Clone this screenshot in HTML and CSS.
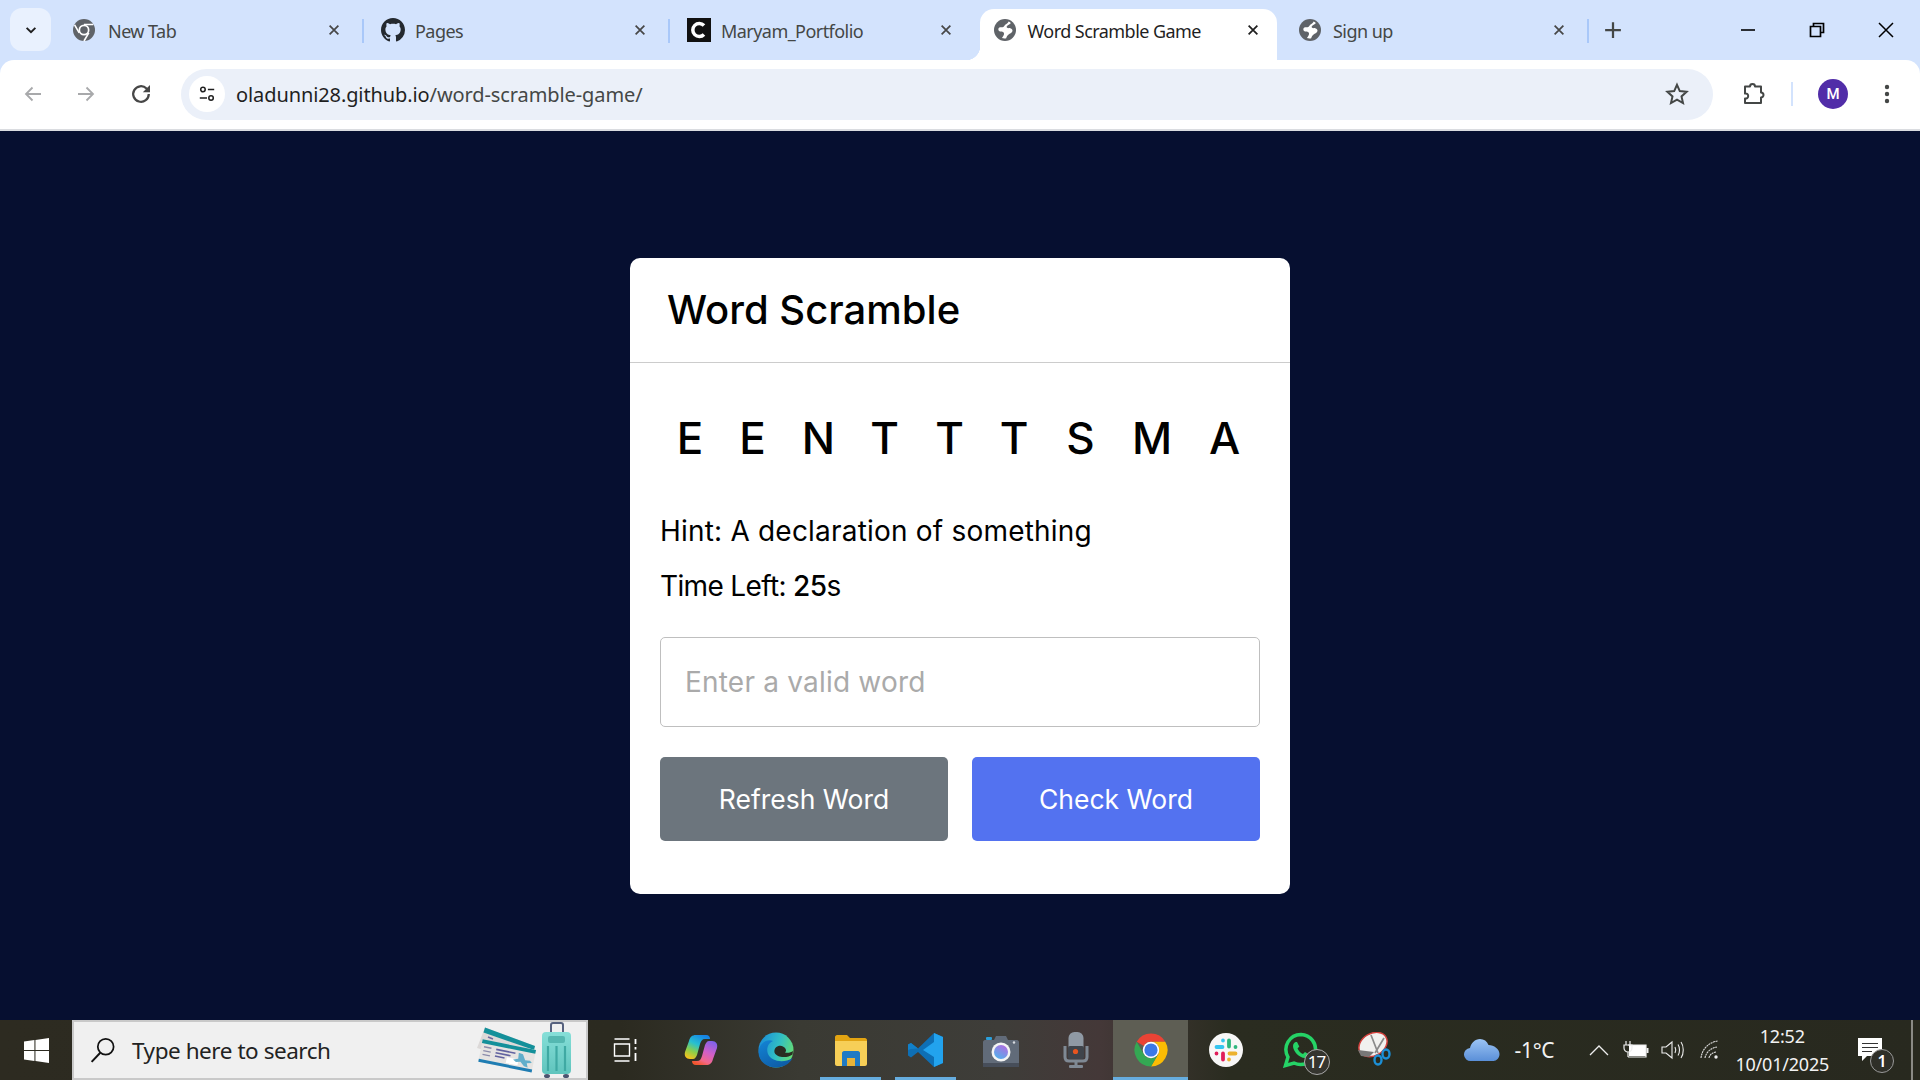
FILE: index.html
```html
<!DOCTYPE html>
<html lang="en">
<head>
<meta charset="utf-8">
<title>Word Scramble Game</title>
<link rel="stylesheet" href="styles.css">
</head>
<body>
<svg class="defs" aria-hidden="true">
  <symbol id="globe" viewBox="0 0 24 24"><circle cx="12" cy="12" r="11" fill="currentColor"/><path fill="#fff" d="M15.500 3.500c-.3 1.800-1.800 2.200-3 3-1.100.8-1 2-2.300 2.500-1.400.5-3.100-.3-4.200.8-1 1-.9 2.800.4 3.400 1.300.7 2.900.1 4 1 1 .9.700 2.400 0 3.500-.5.800-1 1.700-1.500 2.300 1.600.5 3 .5 4.300.2.500-1.500 1.200-2.800 2.400-3.700 1.300-1 3-1.500 3.700-3 .8-1.600-.5-3-2-3.300-1.300-.3-2.600.3-3.400-.6-.7-.9.200-1.800 1-2.300 1.100-.7 2.300-1.100 2.900-2.300-.7-.7-1.500-1.200-2.300-1.500z"/></symbol>
  <symbol id="x" viewBox="0 0 16 16"><path d="M3 3l10 10M13 3L3 13" fill="none" stroke="currentColor" stroke-width="2"/></symbol>
</svg>

<div class="chrome">
  <div class="tabstrip">
    <div class="tab-search"><svg viewBox="0 0 16 16" class="ico-12"><path d="M3 5.500l5 5 5-5" fill="none" stroke="#1f1f1f" stroke-width="2.200"/></svg></div>
    <div class="tab">
      <svg class="fav" viewBox="0 0 24 24"><circle cx="12" cy="12" r="11" fill="#5f6368"/><circle cx="12" cy="12" r="5.500" fill="#fff"/><circle cx="12" cy="12" r="3.800" fill="#5f6368"/><path d="M12 6.500h9.300M7.200 14.800L2.600 6.800M16.800 14.800L12 23" stroke="#fff" stroke-width="1.600"/></svg>
      <span class="tab-title">New Tab</span>
      <svg class="tab-x"><use href="#x"/></svg>
    </div>
    <div class="tab">
      <svg class="fav fav-shift" viewBox="0 0 16 16"><path fill="#24292f" d="M8 0C3.580 0 0 3.580 0 8c0 3.540 2.290 6.530 5.470 7.590.4.070.55-.17.55-.38 0-.19-.01-.82-.01-1.490-2.010.37-2.530-.49-2.690-.94-.09-.23-.48-.94-.82-1.130-.28-.15-.68-.52-.01-.53.63-.01 1.080.58 1.230.82.72 1.210 1.870.87 2.330.66.07-.52.28-.87.51-1.070-1.780-.2-3.640-.89-3.640-3.950 0-.87.31-1.590.82-2.150-.08-.2-.36-1.020.08-2.120 0 0 .67-.21 2.200.82.64-.18 1.320-.27 2-.27.68 0 1.360.09 2 .27 1.530-1.040 2.200-.82 2.200-.82.44 1.100.16 1.920.08 2.120.51.56.82 1.270.82 2.150 0 3.070-1.870 3.750-3.650 3.950.29.25.54.73.54 1.480 0 1.070-.01 1.930-.01 2.200 0 .21.15.46.55.38A8.013 8.013 0 0016 8c0-4.420-3.580-8-8-8z"/></svg>
      <span class="tab-title">Pages</span>
      <svg class="tab-x"><use href="#x"/></svg>
    </div>
    <div class="tab">
      <svg class="fav fav-shift" viewBox="0 0 24 24"><rect width="24" height="24" fill="#111"/><path d="M17 7.500A6.500 6.500 0 1 0 17 16.500" fill="none" stroke="#fff" stroke-width="3.500"/></svg>
      <span class="tab-title">Maryam_Portfolio</span>
      <svg class="tab-x"><use href="#x"/></svg>
    </div>
    <div class="tab tab-active">
      <svg class="fav fav-globe"><use href="#globe"/></svg>
      <span class="tab-title">Word Scramble Game</span>
      <svg class="tab-x"><use href="#x"/></svg>
    </div>
    <div class="tab tab-last">
      <svg class="fav fav-globe"><use href="#globe"/></svg>
      <span class="tab-title">Sign up</span>
      <svg class="tab-x"><use href="#x"/></svg>
    </div>
    <svg class="newtab" viewBox="0 0 16 16"><path d="M8 1v14M1 8h14" stroke="#444746" stroke-width="2"/></svg>
    <div class="winctl">
      <svg class="wc" viewBox="0 0 16 16"><path d="M1 8h14" stroke="#000" stroke-width="1.600"/></svg>
      <svg class="wc" viewBox="0 0 16 16"><path d="M4.500 4V1.500h10v9H12M1.500 4.500h10v10h-10z" fill="none" stroke="#000" stroke-width="1.700"/></svg>
      <svg class="wc" viewBox="0 0 16 16"><path d="M1 1l14 14M15 1L1 15" stroke="#000" stroke-width="1.500"/></svg>
    </div>
  </div>
  <div class="toolbar">
    <svg class="nav" viewBox="0 0 20 20"><path d="M18 10H3M9.500 3.500L3 10l6.500 6.500" fill="none" stroke="#a8a9ab" stroke-width="1.800"/></svg>
    <svg class="nav" viewBox="0 0 20 20"><path d="M2 10h15M10.500 3.500L17 10l-6.500 6.500" fill="none" stroke="#a8a9ab" stroke-width="1.800"/></svg>
    <svg class="nav-reload" viewBox="0 0 20 20"><path d="M16.500 10a6.500 6.500 0 1 1-1.900-4.600L16.500 7.300" fill="none" stroke="#474747" stroke-width="1.900"/><path d="M17.500 2.500v6h-6z" fill="#474747"/></svg>
    <div class="omnibox">
      <div class="tune"><svg viewBox="0 0 20 20" class="tune-ico"><circle cx="5.500" cy="5" r="2.500" fill="none" stroke="#1f1f1f" stroke-width="1.700"/><path d="M11 5h7M2 14.500h8" stroke="#1f1f1f" stroke-width="1.700"/><circle cx="14.500" cy="14.500" r="2.500" fill="none" stroke="#1f1f1f" stroke-width="1.700"/></svg></div>
      <span class="url"><span class="url-host">oladunni28.github.io</span>/word-scramble-game/</span>
      <svg class="star" viewBox="0 0 24 24"><path d="M12 2.800l2.800 6.300 6.800.7-5.100 4.600 1.500 6.700-6-3.500-6 3.500 1.500-6.700-5.100-4.600 6.800-.7z" fill="none" stroke="#444746" stroke-width="2"/></svg>
    </div>
    <svg class="ext" viewBox="0 0 24 24"><path d="M9 4.500a2.500 2.500 0 0 1 5 0h6v6a2.500 2.500 0 0 1 0 5V21H4v-4.500c2 .3 3.200-1 3.200-2.500S6 11.200 4 11.500V4.500z" fill="none" stroke="#444746" stroke-width="2" stroke-linejoin="round"/></svg>
    <div class="tb-sep"></div>
    <div class="avatar">M</div>
    <svg class="dots" viewBox="0 0 6 24"><circle cx="3" cy="5" r="2.200" fill="#444746"/><circle cx="3" cy="12" r="2.200" fill="#444746"/><circle cx="3" cy="19" r="2.200" fill="#444746"/></svg>
  </div>
</div>

<main class="page">
  <section class="card">
    <header class="card-head"><h1 class="title">Word Scramble</h1></header>
    <div class="card-body">
      <p class="letters"><span>E</span><span>E</span><span>N</span><span>T</span><span>T</span><span>T</span><span>S</span><span>M</span><span>A</span></p>
      <p class="hint">Hint: A declaration of something</p>
      <p class="time">Time Left: <b>25</b>s</p>
      <input class="word" type="text" placeholder="Enter a valid word">
      <div class="actions">
        <button class="btn btn-refresh" type="button">Refresh Word</button>
        <button class="btn btn-check" type="button">Check Word</button>
      </div>
    </div>
  </section>
</main>

<footer class="taskbar">
  <div class="start"><svg viewBox="0 0 24 24" class="win"><path fill="#fff" d="M0 3.400l10-1.400v9.500H0zM11 1.900L24 0v11.500H11zM0 12.500h10V22L0 20.600zM11 12.500h13V24l-13-1.900z"/></svg></div>
  <div class="search">
    <svg class="mag" viewBox="0 0 24 24"><circle cx="14.500" cy="9" r="7.300" fill="none" stroke="#111" stroke-width="1.600"/><path d="M9.500 14.500L1.500 23" stroke="#111" stroke-width="1.800"/></svg>
    <span class="search-text">Type here to search</span>
    <svg class="promo" viewBox="0 0 104 58">
      <defs><linearGradient id="case" x1="0" y1="0" x2="0" y2="1"><stop offset="0" stop-color="#86dfd8"/><stop offset="1" stop-color="#5fc4bd"/></linearGradient></defs>
      <polygon points="11,5.500 61,24 56,42 3,26" fill="#dcd9d8"/>
      <polygon points="11,5.500 61,24 60,28 9.500,10.500" fill="#14909a"/>
      <path d="M14 15l5 2M12 20l5 2" stroke="#6a6a9e" stroke-width="1.500"/>
      <g transform="matrix(.533 .107 -.044 .224 8.700 17.300)">
        <rect width="100" height="100" fill="#e6e4e2"/>
        <rect width="100" height="17" fill="#14909a"/>
        <rect y="87" width="100" height="13" fill="#1f7db3"/>
        <rect x="5" y="28" width="14" height="6" fill="#8b8baa"/>
        <rect x="5" y="45" width="14" height="6" fill="#8b8baa"/>
        <rect x="5" y="62" width="14" height="6" fill="#8b8baa"/>
        <rect x="28" y="28" width="36" height="7" fill="#6263a0"/>
        <rect x="28" y="43" width="28" height="7" fill="#6263a0"/>
        <rect x="28" y="58" width="18" height="7" fill="#6263a0"/>
        <rect x="50" y="56" width="22" height="26" fill="#fff"/>
        <path d="M70 27l8 2 6 24 9-2 4 8-9 6 3 17-7-2-8-16-8 5-6-8 9-8z" fill="#62aecb"/>
      </g>
      <path d="M77 10V3c0-1 1-2 2-2h8c1 0 2 1 2 2v7" fill="none" stroke="#56617e" stroke-width="2"/>
      <rect x="68" y="10" width="29" height="42" rx="4" fill="url(#case)"/>
      <rect x="74" y="14" width="17" height="7" rx="2" fill="#55b8b1"/>
      <path d="M74 24v25M82.500 24v25M91 24v25" stroke="#3fa9a3" stroke-width="2.200"/>
      <ellipse cx="73" cy="54" rx="3" ry="2" fill="#4b5470"/><ellipse cx="92" cy="54" rx="3" ry="2" fill="#4b5470"/>
    </svg>
  </div>
  <div class="slot"><svg class="task-view" viewBox="0 0 26 24"><path d="M1.500 1h15M1.500 6h15v12h-15zM1.500 23h15" fill="none" stroke="#fff" stroke-width="1.400"/><path d="M22.500 1v5M22.500 9v2.500M22.500 15v8" stroke="#fff" stroke-width="1.800"/></svg></div>
  <div class="slot"><svg class="app" viewBox="0 0 36 36">
      <defs>
        <linearGradient id="cp1" x1=".7" y1="0" x2=".2" y2="1"><stop offset="0" stop-color="#1684e6"/><stop offset=".4" stop-color="#27c0d0"/><stop offset=".7" stop-color="#8bcf4a"/><stop offset="1" stop-color="#f6c21c"/></linearGradient>
        <linearGradient id="cp2" x1=".8" y1="0" x2=".3" y2="1"><stop offset="0" stop-color="#7d62ea"/><stop offset=".45" stop-color="#d05fc8"/><stop offset=".8" stop-color="#f2688a"/><stop offset="1" stop-color="#f2562e"/></linearGradient>
      </defs>
      <path fill="url(#cp1)" d="M13 3h10c3 0 4 2 4 4H22c-3 0-4 2-5 5l-3 11c-1 2-2 4-4 4H7c-4 0-6-3-5-7l4-11c1-4 3-6 7-6z"/>
      <path fill="url(#cp2)" d="M23 33H13c-3 0-4-2-4-4h5c3 0 4-2 5-5l3-11c1-2 2-4 4-4h3c4 0 6 3 5 7l-4 11c-1 4-3 6-7 6z"/></svg></div>
  <div class="slot"><svg class="app" viewBox="0 0 36 36">
      <defs>
        <linearGradient id="ed1" x1="0" y1=".3" x2="1" y2=".6"><stop offset="0" stop-color="#1a8ed8"/><stop offset=".55" stop-color="#31bfc4"/><stop offset="1" stop-color="#66dc72"/></linearGradient>
        <linearGradient id="ed2" x1="0" y1="0" x2=".6" y2="1"><stop offset="0" stop-color="#1385d6"/><stop offset="1" stop-color="#0e5da8"/></linearGradient>
      </defs>
      <circle cx="18" cy="18" r="17.500" fill="url(#ed1)"/>
      <path fill="url(#ed2)" d="M.5 20C1 11 9 6.500 15 9c-5 2-7 8-5 13 3 7 15 10 24.500 4-3 6-9 9.500-16.500 9.500C8 35.500.5 29 .5 20z"/>
      <path fill="#2a2c22" d="M16.500 20.500C15.500 15.500 21 12.500 25 14.500c3 1.500 4 4.500 2 6 3 .8 6 0 8-1.500l-.5 3.500C30 26 19 26.500 16.500 20.500z"/></svg></div>
  <div class="slot slot-open"><svg class="app" viewBox="0 0 36 36"><path fill="#e2a412" d="M2 5c0-1 1-2 2-2h10l3 3h15c1 0 2 1 2 2v2H2z"/><path fill="#f7cf57" d="M2 9h32v23c0 1-1 2-2 2H4c-1 0-2-1-2-2z"/><path fill="#1f7ac4" d="M9 34V21c0-1 1-2 2-2h14c1 0 2 1 2 2v13h-5v-8h-8v8z"/><rect x="14" y="26" width="8" height="8" fill="#e8b338"/></svg></div>
  <div class="slot slot-open"><svg class="app" viewBox="0 0 36 36"><path fill="#0e6fb5" d="M26 1l9 4v26l-9 4-16-15-7 5.500L0 23.500V12.500L3 11l7 5.500z"/><path fill="#22a3ee" d="M26 1l9 4v26l-9 4V25L15 18l11-8z"/><path fill="#1180c9" d="M10 16.500L3 11 0 12.500V18l3-1z"/></svg></div>
  <div class="slot"><svg class="app" viewBox="0 0 36 36">
      <defs><linearGradient id="lens" x1=".8" y1="0" x2=".2" y2="1"><stop offset="0" stop-color="#b16be0"/><stop offset="1" stop-color="#4fb2ec"/></linearGradient></defs>
      <path fill="#616b79" d="M0 10c0-1 1-2 2-2h9l2-4h10l2 4h9c1 0 2 1 2 2v25H0z"/>
      <rect y="31" width="36" height="4" fill="#474e5a"/>
      <rect x="3" y="5" width="6" height="3" rx="1" fill="#2a9fdc"/>
      <circle cx="18" cy="20" r="9.500" fill="#f4f4f4"/>
      <circle cx="18" cy="20" r="7" fill="url(#lens)"/>
      <circle cx="31" cy="10.500" r="1.200" fill="#d8dce0"/></svg></div>
  <div class="slot"><svg class="app" viewBox="0 0 36 36"><path d="M7 14v11c0 2 1 4 4 4h14c3 0 4-2 4-4V14" fill="none" stroke="#7f8994" stroke-width="3"/><rect x="10.500" y="0" width="15" height="24" rx="6" fill="#8f99a4"/><rect x="10" y="14" width="16" height="13" rx="2" fill="#3f444b"/><circle cx="17.500" cy="19.500" r="2.600" fill="#e8551f"/><rect x="16.500" y="29" width="3" height="5" fill="#7f8994"/><rect x="11" y="33" width="14" height="3" rx="1" fill="#7f8994"/></svg></div>
  <div class="slot slot-open slot-current"><svg class="app" viewBox="0 0 24 24"><path fill="#ea4335" d="M2.470 6.500A11 11 0 0 1 21.530 6.500H12a5.500 5.500 0 0 0-4.760 2.750z"/><path fill="#fbbc04" d="M21.530 6.500A11 11 0 0 1 12 23l4.760-8.250A5.500 5.500 0 0 0 12 6.500z"/><path fill="#34a853" d="M12 23A11 11 0 0 1 2.470 6.500l4.770 8.250a5.500 5.500 0 0 0 9.520 0z"/><circle cx="12" cy="12" r="5.500" fill="#fff"/><circle cx="12" cy="12" r="4.400" fill="#3b78e7"/></svg></div>
  <div class="slot"><svg class="app" viewBox="0 0 36 36"><circle cx="18" cy="18" r="17" fill="#f7f7f7"/><g fill="none" stroke-linecap="round" stroke-width="3.800"><path stroke="#36c5f0" d="M8.500 15h6M15 8.500v.01"/><path stroke="#2eb67d" d="M21 8.500v6M27.500 15h.01"/><path stroke="#ecb22e" d="M21.500 21.500h6M21 27.500v.01"/><path stroke="#e01e5a" d="M15 21.500v6M8.500 21.500h.01"/></g></svg></div>
  <div class="slot"><span class="wa-wrap"><svg class="app" viewBox="0 0 36 36"><path d="M18 2.500a15 15 0 0 0-13 22.500L2.500 33.500 11 31a15 15 0 1 0 7-28.500z" fill="none" stroke="#25d366" stroke-width="3.500"/><path fill="#25d366" d="M13 10c-1 0-3 1.500-3 4 0 5 6 12 12 12 2.500 0 4-2 4-3.500l-4-2.500-2 2c-2-.7-4.500-3-5.500-5.500l1.800-2L14 10z"/></svg><span class="wa-badge">17</span></span></div>
  <div class="slot"><svg class="app" viewBox="0 0 36 36"><ellipse cx="15" cy="12.500" rx="15" ry="11" transform="rotate(-30 15 12.500)" fill="#f1f1ef" stroke="#d3413d" stroke-width="1.500"/><path d="M0 18l16 2-5 5-8-1z" fill="#777"/><path d="M13 3l7 18M26 6l-9 15" stroke="#8a8a8a" stroke-width="1.700"/><ellipse cx="20" cy="28" rx="3.500" ry="4.500" fill="none" stroke="#1c8fd6" stroke-width="2.400"/><ellipse cx="28" cy="22" rx="3.500" ry="4.500" fill="none" stroke="#1c8fd6" stroke-width="2.400"/></svg></div>
  <div class="tray">
    <svg class="cloud" viewBox="0 0 36 24"><defs><linearGradient id="cl" x1="0" y1="0" x2="0" y2="1"><stop offset="0" stop-color="#9cc4f4"/><stop offset="1" stop-color="#5a8fd8"/></linearGradient></defs><path fill="url(#cl)" d="M7 23a6.500 6.500 0 0 1-1-13c1-5 5-9 10-9 4 0 7 2 8.500 6C30 7 35.500 11 35.500 16c0 4-3 7-6 7z"/></svg>
    <span class="temp">-1°C</span>
    <svg class="chev" viewBox="0 0 20 12"><path d="M1 11l9-9 9 9" fill="none" stroke="#eee" stroke-width="1.300"/></svg>
    <svg class="batt" viewBox="0 0 26 20"><path d="M6 5h17v11H6" fill="#fff"/><path d="M5 5h18v12H5" fill="none" stroke="#eee" stroke-width="1.200"/><rect x="23.500" y="8" width="2" height="5" fill="#eee"/><path d="M3 1v4M7 1v4M1 5h8v3a4 4 0 0 1-8 0zM5 12v5" fill="none" stroke="#eee" stroke-width="1.200"/></svg>
    <svg class="vol" viewBox="0 0 24 20"><path d="M1 7h4l6-5v16l-6-5H1z" fill="none" stroke="#eee" stroke-width="1.100"/><path d="M14 7c1 2 1 4 0 6M17 4.500c2 3 2 8 0 11M20 2c3 4 3 12 0 16" fill="none" stroke="#eee" stroke-width="1.100"/></svg>
    <svg class="wifi" viewBox="0 0 20 20"><path d="M1 18C2 9 9 2 18 1M5 18c1-6 6-10 12-11M9 18c.7-3 3-5.500 7-6" fill="none" stroke="#ddd" stroke-width="1.100" stroke-dasharray="2 .6"/><circle cx="16" cy="17" r="1.700" fill="#eee"/></svg>
    <div class="clock"><span>12:52</span><span>10/01/2025</span></div>
    <div class="notif"><svg viewBox="0 0 24 24" class="notif-ico"><path fill="#fff" d="M0 0h24v18H9l-5 5v-5H0z"/><path d="M4 5.500h16M4 9.500h16M4 13.500h10" stroke="#333" stroke-width="1.200"/></svg><span class="notif-badge">1</span></div>
    <div class="peek"></div>
  </div>
</footer>
</body>
</html>
```
FILE: styles.css
```css
* { box-sizing: border-box; }
html, body { margin: 0; padding: 0; height: 100%; }
body {
  width: 1920px;
  height: 1080px;
  overflow: hidden;
  display: flex;
  flex-direction: column;
  background: #060f30;
  font-family: "Inter", "Liberation Sans", sans-serif;
}
.defs { display: none; }

/* Browser chrome */
.chrome { flex: none; height: 131px; background: #d3e3fd; }
.tabstrip { height: 60px; display: flex; align-items: stretch; padding-left: 10px; }
.tab-search {
  width: 41px; height: 43px; margin: 8px 7px 0 0;
  background: #e9f1fe; border-radius: 12px;
  display: flex; align-items: center; justify-content: center;
}
.ico-12 { width: 14px; height: 14px; }
.tab {
  position: relative;
  width: 306px;
  display: flex; align-items: center;
  padding: 0 23px 0 18px;
  color: #444746;
  font: 18px "Noto Sans", sans-serif;
  letter-spacing: -.55px;
}
.tab::after {
  content: ""; position: absolute; right: 0; top: 19px;
  width: 2px; height: 24px; background: #a9c8f9;
}
.tab:nth-of-type(5)::after { display: none; }
.tab:nth-of-type(4)::after { display: none; }
.tab-active {
  color: #1f1f1f;
  background: #fff;
  margin: 9px 5px 0 4px;
  width: 297px;
  padding: 0 17.500px 9px 16.500px;
  border-radius: 14px 14px 0 0;
}
.tab-active::before, .tab-active::after {
  content: ""; display: block; position: absolute; bottom: 0; top: auto;
  width: 14px; height: 14px; background: radial-gradient(circle at 0 0, #d3e3fd 14px, #fff 14.500px);
}
.tab-active::before { left: -14px; }
.tab-active::after { right: -14px; background: radial-gradient(circle at 100% 0, #d3e3fd 14px, #fff 14.500px); }
.tab-last { width: 307px; padding-left: 20px; }
.tab-last::after { display: block; }
.fav { width: 24px; height: 24px; flex: none; margin-right: 12px; margin-left: -4px; }
.fav-shift { margin-left: -1.500px; margin-right: 10.500px; }
.tab-active .fav { margin-right: 11px; }
.tab-last .fav { margin-right: 11px; }
.fav-globe { color: #5f6368; }
.tab-title { flex: 1; white-space: nowrap; padding-top: 1px; }
.tab-x { width: 14px; height: 14px; flex: none; color: #474747; }
.tab-active .tab-x { color: #1f1f1f; }
.newtab { width: 18px; height: 18px; align-self: center; margin-left: 15px; }
.winctl { margin-left: auto; display: flex; align-items: center; padding-right: 26px; gap: 53px; }
.wc { width: 16px; height: 16px; }

.toolbar {
  height: 71px;
  background: #fff;
  border-bottom: 2px solid #dadce0;
  border-radius: 14px 14px 0 0;
  display: flex; align-items: center;
  padding: 0 0 1px 23px;
}
.nav { width: 20px; height: 20px; margin-right: 33px; flex: none; }
.nav-reload { width: 24px; height: 24px; margin-right: 28px; flex: none; }
.omnibox {
  width: 1532px; height: 51px;
  background: #ebf0f9; border-radius: 26px;
  display: flex; align-items: center;
  padding: 0 18px 0 8px;
}
.tune {
  width: 36px; height: 36px; border-radius: 50%; background: #fff;
  display: flex; align-items: center; justify-content: center; flex: none;
}
.tune-ico { width: 18px; height: 18px; }
.url {
  flex: 1; margin-left: 11px;
  font: 20px "Noto Sans", sans-serif; letter-spacing: -.1px; color: #444746;
}
.url-host { color: #1f1f1f; }
.star { width: 24px; height: 24px; flex: none; margin-right: 6.500px; }
.ext { width: 24px; height: 24px; margin-left: 28px; flex: none; }
.tb-sep { width: 2px; height: 24px; background: #d3e3fd; margin-left: 26px; }
.avatar {
  width: 30px; height: 30px; border-radius: 50%; margin-left: 25px;
  background: #512da8; color: #fff;
  font: 500 15px/30px "Roboto", sans-serif; text-align: center;
}
.dots { width: 6px; height: 24px; margin-left: 36px; }

/* Page */
.page { flex: 1; min-height: 0; display: flex; align-items: center; justify-content: center; background: #060f30; }
.card { width: 660px; height: 636px; background: #fff; border-radius: 10px; color: #000; }
.card-head { height: 105px; border-bottom: 1px solid #ccc; display: flex; align-items: center; padding-left: 37px; }
.title { margin: 0; font-size: 40px; font-weight: 500; }
.card-body { padding: 45px 30px 0; }
.letters {
  margin: 0; height: 60px;
  display: grid;
  grid-template-columns: 60px 65px 67px 65px 65px 64px 69px 74px 71px;
  text-align: center;
  font-size: 44px; font-weight: 500; line-height: 60px;
}
.hint, .time { margin: 0; font-size: 28px; line-height: 40px; }
.hint { margin-top: 43px; letter-spacing: .2px; }
.time { margin-top: 15px; letter-spacing: -.65px; }
.time b { font-weight: 500; }
.word {
  display: block; width: 100%; height: 90px; margin-top: 31px;
  border: 1px solid #bfbfbf; border-radius: 5px; background: #fff;
  padding: 0 24px; outline: none;
  font: 28px "Inter", sans-serif; letter-spacing: .2px; color: #000;
}
.word::placeholder { color: #aaa; opacity: 1; }
.actions { display: flex; gap: 24px; margin-top: 30px; }
.btn {
  flex: 1; height: 84px; border: 0; border-radius: 5px;
  color: #fff; font: 26.500px "Inter", sans-serif;
}
.btn-refresh { background: #6c757d; }
.btn-check { background: #5372f0; }

/* Taskbar */
.taskbar {
  flex: none; height: 60px;
  display: flex; align-items: stretch;
  background: linear-gradient(90deg, #2d2b21 0, #2b2a20 620px, #3a3a33 800px, #3e3d39 1000px, #443838 1100px, #2a2c20 1230px, #28291f 1920px);
  color: #f2f2f2;
}
.start { width: 72px; display: flex; align-items: center; justify-content: center; }
.win { width: 25px; height: 25px; }
.search {
  width: 516px; background: #f0f0f0;
  border: 2px solid #c9c9c9;
  display: flex; align-items: center;
  padding-left: 16px;
  position: relative;
}
.mag { width: 26px; height: 26px; flex: none; }
.search-text { margin-left: 16px; font: 22.500px "Noto Sans", sans-serif; letter-spacing: -.45px; color: #222; white-space: nowrap; }
.promo { position: absolute; right: 8px; top: 0; width: 104px; height: 58px; }
.slot { width: 75px; flex: none; display: flex; align-items: center; justify-content: center; position: relative; }
.slot-open::after { content: ""; position: absolute; left: 7px; right: 7px; bottom: 0; height: 3px; background: #66addf; }
.slot-current { background: #5e5e54; }
.slot-current::after { left: 0; right: 0; }
.app { width: 36px; height: 36px; display: block; }
.task-view { width: 26px; height: 24px; }
.wa-wrap { position: relative; display: block; width: 36px; height: 36px; }
.wa-badge {
  position: absolute; left: 21px; top: 17px; width: 26px; height: 26px;
  border-radius: 50%; border: 1px solid #aaa; background: #35352f;
  font: 17px/24px "Noto Sans", sans-serif; letter-spacing: -1px; text-align: center; color: #fff;
}
.tray { flex: 1; display: flex; align-items: center; padding-left: 50.500px; }
.cloud { width: 36px; height: 24px; flex: none; }
.temp { margin-left: 15px; font: 21px "Noto Sans", sans-serif; letter-spacing: -.3px; white-space: nowrap; width: 74.500px; }
.chev { width: 20px; height: 12px; flex: none; }
.batt { width: 26px; height: 20px; margin-left: 13.700px; flex: none; }
.vol { width: 24px; height: 20px; margin-left: 12px; flex: none; }
.wifi { width: 20px; height: 20px; margin-left: 15px; flex: none; }
.clock {
  width: 110px; margin-left: 7.600px; margin-right: 6px;
  display: flex; flex-direction: column; align-items: center; gap: 7px;
  font: 18px/21px "Noto Sans", sans-serif; letter-spacing: -.2px; white-space: nowrap;
}
.notif { position: relative; width: 24px; height: 24px; margin-left: 14.700px; flex: none; }
.notif-ico { width: 24px; height: 24px; display: block; }
.notif-badge {
  position: absolute; left: 12px; top: 11px; width: 24px; height: 24px;
  border-radius: 50%; border: 1px solid #999; background: #2f2f28;
  font: 600 16px/22px "Noto Sans", sans-serif; text-align: center; color: #fff;
}
.peek { width: 2px; height: 60px; background: #8a8a85; margin-left: 29px; }
```
